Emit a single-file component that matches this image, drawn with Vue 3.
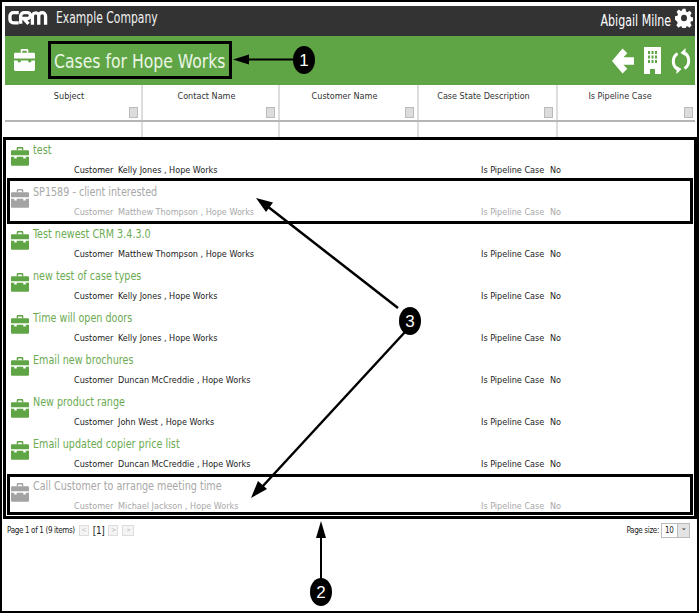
<script setup>
const columns = ['Subject', 'Contact Name', 'Customer Name', 'Case State Description', 'Is Pipeline Case']
const cases = [
  { title: 'test', who: 'Kelly Jones , Hope Works' },
  { title: 'SP1589 - client interested', who: 'Matthew Thompson , Hope Works', closed: true },
  { title: 'Test newest CRM 3.4.3.0', who: 'Matthew Thompson , Hope Works' },
  { title: 'new test of case types', who: 'Kelly Jones , Hope Works' },
  { title: 'Time will open doors', who: 'Kelly Jones , Hope Works' },
  { title: 'Email new brochures', who: 'Duncan McCreddie , Hope Works' },
  { title: 'New product range', who: 'John West , Hope Works' },
  { title: 'Email updated copier price list', who: 'Duncan McCreddie , Hope Works' },
  { title: 'Call Customer to arrange meeting time', who: 'Michael Jackson , Hope Works', closed: true },
]
</script>

<template>
  <div class="page">
    <header class="topbar">
      <div class="brand">
        <svg class="logo" width="41" height="16" viewBox="0 0 42 16" fill="none" stroke="#fff" stroke-width="3.4">
          <path d="M11 2.500H5.500a3.500 3.500 0 0 0-3.500 3.500v3.500a3.500 3.500 0 0 0 3.500 3.500H11" />
          <path d="M13 14V6a3.500 3.500 0 0 1 3.500-3.500H20a2.800 2.800 0 0 1 0 6H16l5 5.500" />
          <path d="M25 15V6a3.500 3.500 0 0 1 6.500-1.500V15M31.500 6a3.500 3.500 0 0 1 7 0v9" />
        </svg>
        <span class="company">Example Company</span>
      </div>
      <div class="user">
        <span class="username">Abigail Milne</span>
        <svg class="gear" width="18" height="20" viewBox="0 0 24 24" preserveAspectRatio="none" fill="#fff">
          <path fill-rule="evenodd" d="M10 1h4l.7 3.200 1.900.8 2.800-1.800 2.800 2.800-1.800 2.800.8 1.900 3.200.7v4l-3.200.7-.8 1.900 1.800 2.800-2.800 2.800-2.800-1.800-1.900.8-.7 3.200h-4l-.7-3.200-1.900-.8-2.800 1.800-2.800-2.800 1.800-2.800-.8-1.900L0 14v-4l3.200-.7.8-1.900-1.800-2.800L5 1.800l2.800 1.800 1.900-.8zM12 8a4 4 0 1 0 0 8 4 4 0 0 0 0-8z" />
        </svg>
      </div>
    </header>

    <section class="titlebar">
      <div class="title-left">
        <svg class="case-icon" width="21" height="23" viewBox="0 0 22 24" fill="#fff">
          <path d="M7 5V2.500C7 1.500 7.700 1 8.500 1h5c.8 0 1.500.5 1.500 1.500V5h-1.700V2.800H8.700V5z" />
          <path d="M0 6.500C0 5.600.6 5 1.500 5h19c.9 0 1.500.6 1.500 1.500V11H0zM0 13h4v2h3v-2h8v2h3v-2h4v9.500c0 .9-.6 1.500-1.500 1.500h-19C.6 24 0 23.400 0 22.500z" />
        </svg>
        <h1 class="title">Cases for Hope Works</h1>
      </div>
      <div class="actions">
        <svg width="22" height="26" viewBox="0 0 23 26" fill="#fff">
          <path d="M11 0l5 5-4 4h11v8H12l4 4-5 5L0 13z" />
        </svg>
        <svg width="17" height="27" viewBox="0 0 17 27" fill="#fff">
          <path fill-rule="evenodd" d="M0 0h17v27h-6v-5H6v5H0zM4 4v3h2V4zm3.500 0v3h2V4zM11 4v3h2V4zM4 8.500v3h2v-3zm3.500 0v3h2v-3zm3.500 0v3h2v-3zM4 13v3h2v-3zm3.500 0v3h2v-3zm3.500 0v3h2v-3z" />
        </svg>
        <svg width="20" height="26" viewBox="0 0 20 26" fill="none" stroke="#fff" stroke-width="3">
          <path d="M6 21C1 17 1 9 6.500 5.500" />
          <path d="M14 5c5 4 5 12-.5 15.500" />
          <path d="M14.500 0v8l-5-3z" fill="#fff" stroke="none" />
          <path d="M5.500 26v-8l5 3z" fill="#fff" stroke="none" />
        </svg>
      </div>
    </section>

    <div class="grid-head">
      <div v-for="c in columns" :key="c" class="head-cell">
        <span>{{ c }}</span>
        <i class="filter-btn"></i>
      </div>
    </div>
    <div class="grid-filter">
      <div v-for="c in columns" :key="c" class="filter-cell"></div>
    </div>

    <main class="list">
      <article v-for="c in cases" :key="c.title" class="row" :class="{ closed: c.closed }">
        <svg class="row-icon" width="18" height="20" viewBox="0 0 22 24">
          <path d="M7 5V2.500C7 1.500 7.700 1 8.500 1h5c.8 0 1.500.5 1.500 1.500V5h-1.700V2.800H8.700V5z" />
          <path d="M0 6.500C0 5.600.6 5 1.500 5h19c.9 0 1.500.6 1.500 1.500V11H0zM0 13h4v2h3v-2h8v2h3v-2h4v9.500c0 .9-.6 1.500-1.500 1.500h-19C.6 24 0 23.400 0 22.500z" />
        </svg>
        <div class="row-title">{{ c.title }}</div>
        <div class="row-meta">
          <span class="label">Customer</span>
          <span class="who">{{ c.who }}</span>
          <span class="label pipe">Is Pipeline Case</span>
          <span>No</span>
        </div>
      </article>
    </main>

    <footer class="pager">
      <div class="pages">
        <span>Page 1 of 1 (9 items)</span>
        <i class="pg-btn first">&lt;</i>
        <b class="current">[1]</b>
        <i class="pg-btn">&gt;</i>
        <i class="pg-btn wide">»</i>
      </div>
      <div class="size">
        <span>Page size:</span>
        <div class="select"><span>10</span><i class="select-btn">⌄</i></div>
      </div>
    </footer>

    <div class="mark box-title"></div>
    <div class="mark box-list"></div>
    <div class="mark box-row-a"></div>
    <div class="mark box-row-b"></div>

    <svg class="arrows" width="699" height="613" viewBox="0 0 699 613">
      <g stroke="#000" stroke-width="2" fill="#000">
        <path d="M248 59.500H295" />
        <path d="M233 59.500l16-5v10z" stroke="none" />
        <path d="M321 579V536" />
        <path d="M321 521l-5 17h10z" stroke="none" />
        <path d="M398 308L267 206" stroke-width="2.500" />
        <path d="M256 198l17 4.500-7 9.500z" stroke="none" />
        <path d="M405 332L262 487" stroke-width="2.500" />
        <path d="M251 498l7-17 9 8z" stroke="none" />
      </g>
      <g fill="#000">
        <ellipse cx="304" cy="60" rx="11" ry="14" />
        <ellipse cx="321" cy="592" rx="11" ry="14" />
        <ellipse cx="410" cy="321" rx="11" ry="14" />
      </g>
      <g class="num" fill="#fff" text-anchor="middle">
        <text x="304" y="66">1</text>
        <text x="321" y="598">2</text>
        <text x="410" y="327">3</text>
      </g>
    </svg>
  </div>
</template>

<style>
html, body { margin: 0; background: #fff; }
</style>

<style scoped>
.page {
  position: relative;
  box-sizing: border-box;
  width: 699px;
  height: 613px;
  padding: 4px 2px 0 3px;
  border: 2px solid #000;
  background: #fff;
  overflow: hidden;
  font-family: "DejaVu Sans Condensed", "DejaVu Sans", sans-serif;
  font-stretch: condensed;
  color: #222;
}
.topbar {
  height: 30px;
  background: #333;
  color: #fff;
  display: flex;
  align-items: center;
  justify-content: space-between;
  padding: 0 0 0 3px;
}
.brand { display: flex; align-items: center; gap: 7px; margin-top: -6px; }
.company {
  display: inline-block;
  font-size: 15px;
  color: #f0f0f0;
  transform: scaleX(0.8);
  transform-origin: left center;
}
.user { display: flex; align-items: center; gap: 4px; padding-right: 2px; }
.username {
  font-size: 15px;
  transform: scaleX(0.82);
  transform-origin: right center;
}
.gear { margin-top: -6px; }
.titlebar {
  height: 49px;
  background: #5fa545;
  display: flex;
  align-items: center;
  justify-content: space-between;
}
.title-left { display: flex; align-items: center; gap: 19px; padding-left: 9px; }
.case-icon { margin-top: -2px; }
.title {
  margin: 0;
  font-size: 20px;
  font-weight: 400;
  color: #eaf5e5;
  transform: scaleX(0.87);
  transform-origin: left center;
}
.actions { display: flex; align-items: center; gap: 10px; padding-right: 4px; }
.grid-head, .grid-filter {
  display: grid;
  grid-template-columns: 138px 137px 139px 139px 138px;
}
.grid-head { height: 35px; border-bottom: 2px solid #b5b5b5; }
.head-cell {
  position: relative;
  border-right: 2px solid #ddd;
  text-align: center;
  font-size: 9px;
  padding: 6px 8px 0 0;
  color: #333;
}
.head-cell:last-child { padding-right: 14px; }
.head-cell:last-child, .filter-cell:last-child { border-right: 0; }
.filter-btn {
  position: absolute;
  right: 3px;
  bottom: 2px;
  width: 9px;
  height: 11px;
  background: #dcdcdc;
  border: 1px solid #bbb;
  box-sizing: border-box;
}
.grid-filter { height: 16px; }
.filter-cell { border-right: 2px solid #ddd; }
.list { padding: 1px 0 0 5px; }
.row {
  display: grid;
  grid-template-columns: 20px 1fr;
  grid-template-rows: 22px 20px;
  height: 42px;
  column-gap: 3px;
}
.row-icon { grid-row: 1 / 3; margin: 7px 0 0 1px; fill: #5fa545; }
.row-title {
  font-size: 12px;
  color: #6cab52;
  padding-top: 4px;
  transform: scaleX(0.89);
  transform-origin: left center;
  white-space: nowrap;
}
.row-meta {
  display: flex;
  font-size: 9px;
  color: #222;
  padding-left: 41px;
  line-height: 18px;
}
.label { width: 44px; flex: none; }
.who { width: 363px; flex: none; }
.pipe { width: 69px; }
.closed .row-icon { fill: #a3a3a3; }
.closed .row-title, .closed .row-meta { color: #a8a8a8; }
.pager {
  display: flex;
  justify-content: space-between;
  padding: 6px 5px 0 2px;
  font-size: 8px;
  color: #222;
  letter-spacing: -0.35px;
}
.pages { display: flex; align-items: center; gap: 4px; height: 15px; }
.pg-btn {
  width: 10px;
  height: 11px;
  border: 1px solid #ddd;
  box-sizing: border-box;
  background: #f4f4f4;
  color: #bbb;
  font-style: normal;
  font-size: 7px;
  line-height: 9px;
  text-align: center;
}
.pg-btn.wide { width: 12px; }
.current { font-size: 10px; font-weight: 400; }
.size { display: flex; align-items: center; gap: 2px; height: 15px; }
.select {
  display: flex;
  justify-content: space-between;
  width: 29px;
  height: 15px;
  box-sizing: border-box;
  border: 1px solid #bbb;
  padding-left: 3px;
  line-height: 13px;
}
.select-btn {
  width: 11px;
  background: #e3e3e3;
  border-left: 1px solid #bbb;
  font-style: normal;
  text-align: center;
  line-height: 7px;
}
.mark {
  position: absolute;
  box-sizing: border-box;
  border: 3px solid #000;
  pointer-events: none;
}
.box-title { left: 46px; top: 39px; width: 184px; height: 38px; }
.box-list { left: 1px; top: 135px; width: 694px; height: 382px; }
.box-row-a { left: 5px; top: 176px; width: 686px; height: 46px; }
.box-row-b { left: 5px; top: 472px; width: 686px; height: 41px; }
.arrows { position: absolute; left: -2px; top: -2px; pointer-events: none; }
.num text { font-size: 17px; font-family: "Liberation Sans", sans-serif; }
</style>
